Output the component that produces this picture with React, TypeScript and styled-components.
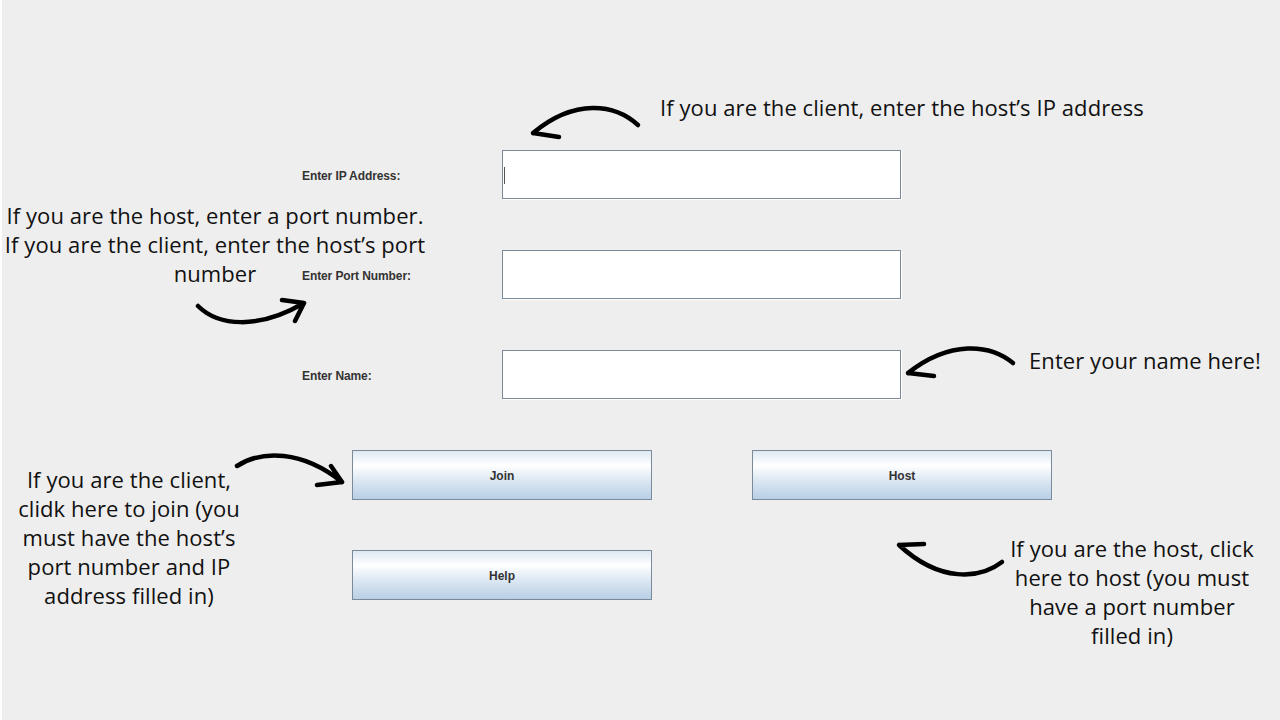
import React from 'react';
import styled, { createGlobalStyle } from 'styled-components';

const GlobalStyle = createGlobalStyle`
  html, body {
    margin: 0;
    padding: 0;
    background: #eeeeee;
  }
  * {
    box-sizing: border-box;
  }
`;

const Page = styled.div`
  position: relative;
  width: 1280px;
  height: 720px;
  overflow: hidden;
  background: #eeeeee;
  box-shadow: inset 2px 0 0 #ffffff;
`;

const Form = styled.div`
  display: flex;
  flex-direction: column;
  padding: 150px 0 0 302px;
`;

const FieldRow = styled.div`
  display: grid;
  grid-template-columns: 200px 399px;
  align-items: start;
  height: 100px;
`;

const Label = styled.label`
  font-family: 'Liberation Sans', Arial, sans-serif;
  font-weight: 700;
  font-size: 12px;
  color: #333333;
  line-height: 49px;
  padding-top: 2px;
  letter-spacing: -0.1px;
`;

const TextField = styled.div<{ $caret?: boolean }>`
  position: relative;
  height: 49px;
  background: #ffffff;
  border: 1px solid #7a8a99;
  box-shadow: 1px 1px 0 #ffffff;

  &::after {
    content: '';
    display: ${p => (p.$caret ? 'block' : 'none')};
    position: absolute;
    left: 1px;
    top: 16px;
    width: 1px;
    height: 17px;
    background: #555555;
  }
`;

const ButtonRow = styled.div`
  display: flex;
  gap: 100px;
  height: 100px;
  margin-left: 50px;
`;

const SwingButton = styled.button`
  width: 300px;
  height: 50px;
  border: 1px solid #7a8a99;
  background: linear-gradient(
    to bottom,
    #dde8f3 0%,
    #ffffff 30%,
    #dde8f3 60%,
    #b8cfe5 100%
  );
  font-family: 'Liberation Sans', Arial, sans-serif;
  font-weight: 700;
  font-size: 12px;
  color: #333333;
  padding: 2px 0 0;
  cursor: pointer;
`;

const Note = styled.div<{ $x: number; $y: number; $center?: boolean }>`
  position: absolute;
  left: ${p => p.$x}px;
  top: ${p => p.$y}px;
  transform: ${p => (p.$center ? 'translateX(-50%)' : 'none')};
  text-align: ${p => (p.$center ? 'center' : 'left')};
  white-space: nowrap;
  font-family: 'Open Sans', 'Noto Sans', sans-serif;
  font-size: 22px;
  letter-spacing: 0.08px;
  line-height: 29px;
  color: #111111;
`;

const Arrows = styled.svg`
  position: absolute;
  left: 0;
  top: 0;
  pointer-events: none;
`;

const arrowPaths = [
  'M638 125 C615 104, 575 98, 533 133 M533 133 L559 137',
  'M198 306 C218 326, 258 330, 304 303 M304 303 L282 300 M304 303 L295 321',
  'M1013 363 C990 344, 950 340, 908 373 M908 373 L934 376',
  'M237 466 C262 450, 302 450, 342 482 M342 482 L331 466 M342 482 L317 485',
  'M1002 562 C980 579, 940 583, 899 545 M899 545 L924 544',
];

export default function App() {
  return (
    <>
      <GlobalStyle />
      <Page>
        <Form>
          <FieldRow>
            <Label>Enter IP Address:</Label>
            <TextField $caret />
          </FieldRow>
          <FieldRow>
            <Label>Enter Port Number:</Label>
            <TextField />
          </FieldRow>
          <FieldRow>
            <Label>Enter Name:</Label>
            <TextField />
          </FieldRow>
          <ButtonRow>
            <SwingButton>Join</SwingButton>
            <SwingButton>Host</SwingButton>
          </ButtonRow>
          <ButtonRow>
            <SwingButton>Help</SwingButton>
          </ButtonRow>
        </Form>

        <Note $x={660} $y={93}>
          If you are the client, enter the host’s IP address
        </Note>
        <Note $x={215} $y={201} $center>
          If you are the host, enter a port number.
          <br />
          If you are the client, enter the host’s port
          <br />
          number
        </Note>
        <Note $x={1029} $y={346}>
          Enter your name here!
        </Note>
        <Note $x={129} $y={465} $center>
          If you are the client,
          <br />
          clidk here to join (you
          <br />
          must have the host’s
          <br />
          port number and IP
          <br />
          address filled in)
        </Note>
        <Note $x={1132} $y={534} $center>
          If you are the host, click
          <br />
          here to host (you must
          <br />
          have a port number
          <br />
          filled in)
        </Note>

        <Arrows width="1280" height="720" viewBox="0 0 1280 720">
          {arrowPaths.map(d => (
            <path
              key={d}
              d={d}
              fill="none"
              stroke="#000000"
              strokeWidth={4.5}
              strokeLinecap="round"
              strokeLinejoin="round"
            />
          ))}
        </Arrows>
      </Page>
    </>
  );
}
